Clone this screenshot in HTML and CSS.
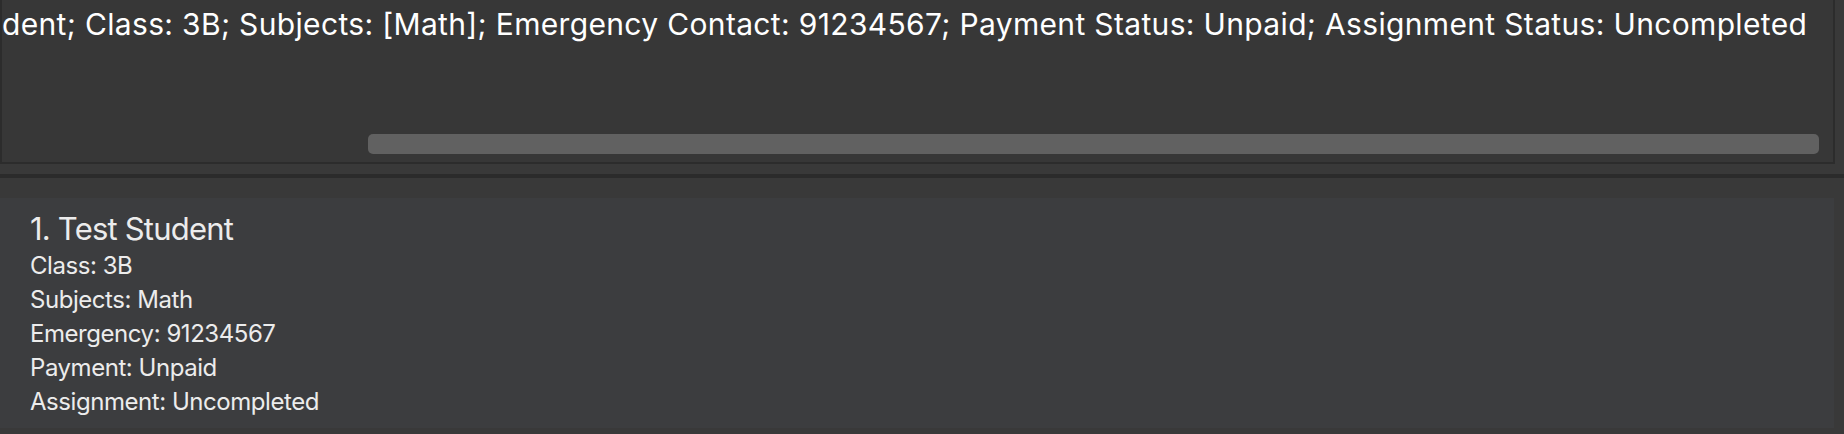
FILE: index.html
```html
<!DOCTYPE html>
<html>
<head>
<meta charset="utf-8">
<link rel="stylesheet" href="styles.css">
</head>
<body>
<div class="app">
  <section class="result-pane">
    <div class="result-text">dent; Class: 3B; Subjects: [Math]; Emergency Contact: 91234567; Payment Status: Unpaid; Assignment Status: Uncompleted</div>
    <div class="hscroll">
      <div class="hscroll-thumb"></div>
    </div>
  </section>
  <div class="gap"></div>
  <div class="divider"></div>
  <section class="list-pane">
    <div class="card">
      <div class="card-title">1. Test Student</div>
      <div class="card-line">Class: 3B</div>
      <div class="card-line">Subjects: Math</div>
      <div class="card-line">Emergency: 91234567</div>
      <div class="card-line">Payment: Unpaid</div>
      <div class="card-line">Assignment: Uncompleted</div>
    </div>
  </section>
</div>
</body>
</html>
```

FILE: styles.css
```css
html, body {
  margin: 0;
  padding: 0;
}

body {
  width: 1844px;
  height: 434px;
  overflow: hidden;
  background: #393939;
  font-family: Inter, "Noto Sans", "Liberation Sans", sans-serif;
}

.app {
  display: flex;
  flex-direction: column;
  width: 1844px;
}

.result-pane {
  width: 1835px;
  height: 164px;
  box-sizing: border-box;
  background: #373737;
  border-left: 2px solid #2c2c2c;
  border-right: 2px solid #2c2c2c;
  border-bottom: 2px solid #2c2c2c;
  display: flex;
  flex-direction: column;
  overflow: hidden;
}

.result-text {
  white-space: nowrap;
  color: #ffffff;
  font-size: 30px;
  letter-spacing: 0.34px;
  line-height: 40px;
  padding-top: 4px;
  padding-left: 0;
  height: 40px;
}

.hscroll {
  margin-top: auto;
  margin-bottom: 8px;
  padding-left: 366px;
  padding-right: 14px;
}

.hscroll-thumb {
  height: 20px;
  background: #616161;
  border-radius: 5px;
}

.gap {
  height: 10px;
}

.divider {
  height: 4px;
  background: #2b2b2b;
}

.list-pane {
  padding-top: 20px;
  padding-right: 10px;
}

.card {
  background: #3c3d3f;
  height: 230px;
  box-sizing: border-box;
  padding: 11px 0 0 30px;
  color: #ececec;
}

.card-title {
  font-size: 31px;
  letter-spacing: -0.8px;
  line-height: 40px;
}

.card-line {
  font-size: 24px;
  letter-spacing: -0.45px;
  line-height: 34px;
}
```
